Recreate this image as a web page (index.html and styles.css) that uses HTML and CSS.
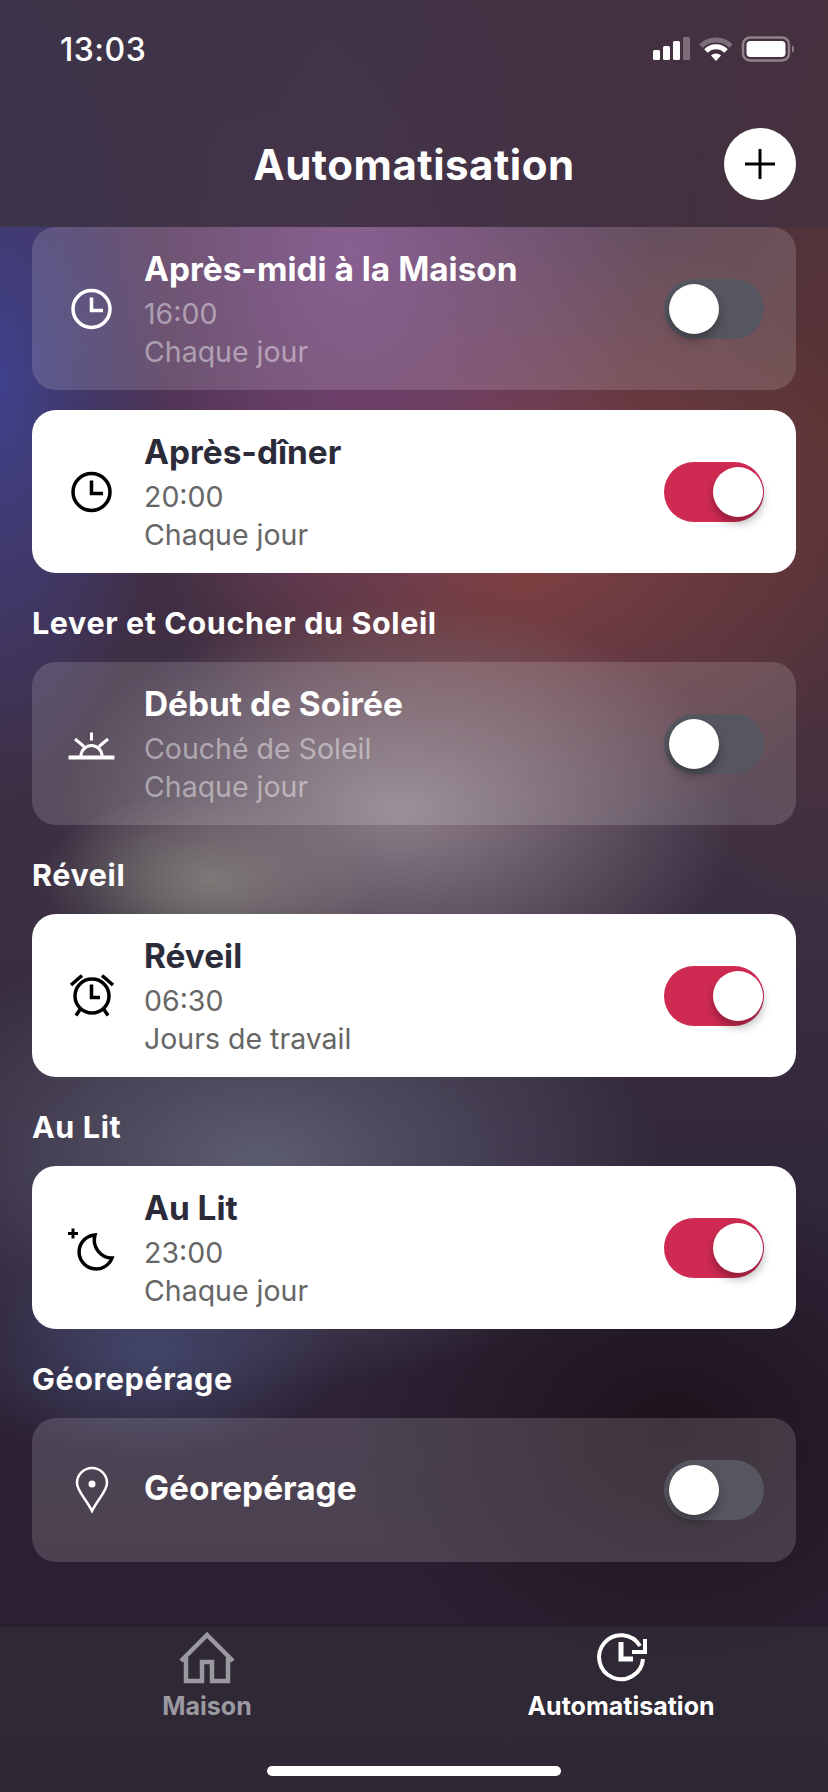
FILE: index.html
```html
<!DOCTYPE html>
<html lang="fr">
<head>
    <meta charset="UTF-8">
    <meta name="viewport" content="width=device-width, initial-scale=1.0">
    <title>Automatisation</title>
    <link rel="stylesheet" href="styles.css">
</head>
<body>
    <div class="screen">
        <header class="top">
            <div class="status">
                <span class="status-time">13:03</span>
                <svg class="status-icons" width="142" height="26" viewBox="0 0 142 26">
                    <rect x="1" y="14" width="7" height="10" rx="1.5" fill="#fff"/>
                    <rect x="11" y="10" width="7" height="14" rx="1.5" fill="#fff"/>
                    <rect x="21" y="5" width="7" height="19" rx="1.5" fill="#fff"/>
                    <rect x="31" y="1" width="7" height="23" rx="1.5" fill="#fff" opacity=".3"/>
                    <path d="M49 10a22 22 0 0 1 30 0" fill="none" stroke="#fff" stroke-opacity=".3" stroke-width="5"/>
                    <path d="M54 15a14 14 0 0 1 20 0" fill="none" stroke="#fff" stroke-width="5"/>
                    <path d="M59 19.500a7 7 0 0 1 10 0L64 25z" fill="#fff"/>
                    <rect x="91" y="1.500" width="46" height="23" rx="7" fill="none" stroke="#fff" stroke-opacity=".4" stroke-width="2.500"/>
                    <rect x="94.500" y="5" width="39" height="16" rx="4" fill="#fff"/>
                    <path d="M140 9.500c1.500.5 2 2 2 3.500s-.5 3-2 3.500z" fill="#fff" opacity=".4"/>
                </svg>
            </div>
            <div class="top-bar">
                <h1 class="top-title">Automatisation</h1>
                <button class="add-btn" type="button">
                    <svg width="32" height="32" viewBox="0 0 32 32"><path d="M16 1v30M1 16h30" stroke="#000" stroke-width="3"/></svg>
                </button>
            </div>
        </header>

        <main class="list">
            <div class="card off">
                <svg class="card-icon" viewBox="0 0 46 46"><circle cx="23.500" cy="23" r="18.500"/><path d="M23.500 11.500v13H35"/></svg>
                <div class="card-text">
                    <div class="card-title">Après-midi à la Maison</div>
                    <div class="card-sub">16:00</div>
                    <div class="card-sub">Chaque jour</div>
                </div>
                <div class="toggle"><span class="knob"></span></div>
            </div>
            <div class="card on">
                <svg class="card-icon" viewBox="0 0 46 46"><circle cx="23.500" cy="23" r="18.500"/><path d="M23.500 11.500v13H35"/></svg>
                <div class="card-text">
                    <div class="card-title">Après-dîner</div>
                    <div class="card-sub">20:00</div>
                    <div class="card-sub">Chaque jour</div>
                </div>
                <div class="toggle"><span class="knob"></span></div>
            </div>

            <h2 class="section">Lever et Coucher du Soleil</h2>
            <div class="card off">
                <svg class="card-icon" viewBox="0 0 46 46"><path d="M.5 36.500h46" stroke-width="4"/><path d="M13 35a10.500 10.500 0 0 1 21 0M23.500 11.500v8M7 18l9 7.500M40 18l-9 7.500" stroke-width="3"/></svg>
                <div class="card-text">
                    <div class="card-title">Début de Soirée</div>
                    <div class="card-sub">Couché de Soleil</div>
                    <div class="card-sub">Chaque jour</div>
                </div>
                <div class="toggle"><span class="knob"></span></div>
            </div>

            <h2 class="section">Réveil</h2>
            <div class="card on">
                <svg class="card-icon" viewBox="0 0 46 46"><circle cx="24" cy="23" r="17"/><path d="M23.500 11.500v13H32M3 12 14 2.500M45 12 34 2.500M13 35 8 42.500M35 35l5 7.500"/></svg>
                <div class="card-text">
                    <div class="card-title">Réveil</div>
                    <div class="card-sub">06:30</div>
                    <div class="card-sub">Jours de travail</div>
                </div>
                <div class="toggle"><span class="knob"></span></div>
            </div>

            <h2 class="section">Au Lit</h2>
            <div class="card on">
                <svg class="card-icon" viewBox="0 0 46 46"><path d="M27 10A17 17 0 1 0 44 33 18 18 0 0 1 27 10z"/><path d="M5 3.500v10M0 8.500h10" stroke-width="3"/></svg>
                <div class="card-text">
                    <div class="card-title">Au Lit</div>
                    <div class="card-sub">23:00</div>
                    <div class="card-sub">Chaque jour</div>
                </div>
                <div class="toggle"><span class="knob"></span></div>
            </div>

            <h2 class="section">Géorepérage</h2>
            <div class="card off short">
                <svg class="card-icon" viewBox="0 0 46 46"><path d="M24 44C18 32 9 24 9 16a15 15 0 0 1 30 0C39 24 30 32 24 44z" stroke-width="2.500"/><circle class="dot" cx="24" cy="17" r="3.500"/></svg>
                <div class="card-text">
                    <div class="card-title">Géorepérage</div>
                </div>
                <div class="toggle"><span class="knob"></span></div>
            </div>
        </main>

        <nav class="tabs">
            <div class="tab">
                <svg class="tab-icon" viewBox="0 0 60 54"><path d="M4 29 30 3l26 26M9 24v25h16V30h10v19h16V24" fill="none" stroke="currentColor" stroke-width="4.500"/></svg>
                <span>Maison</span>
            </div>
            <div class="tab active">
                <svg class="tab-icon" viewBox="0 0 60 54"><path d="M49 14A22 22 0 1 0 52 27" fill="none" stroke="currentColor" stroke-width="4"/><path d="M30 10v17h12" fill="none" stroke="currentColor" stroke-width="5"/><path d="M41 20h13V7" fill="none" stroke="currentColor" stroke-width="4"/></svg>
                <span>Automatisation</span>
            </div>
            <div class="home-bar"></div>
        </nav>
    </div>
</body>
</html>
```

FILE: styles.css
```css
body {
    margin: 0;
    font-family: Inter, "Liberation Sans", sans-serif;
    color: #fff;
    background-color: #2c1c30;
}

.screen {
    width: 828px;
    height: 1792px;
    display: flex;
    flex-direction: column;
    overflow: hidden;
    background-color: #2c1e30;
    background-image:
        radial-gradient(ellipse 170px 420px at 0 380px, #3f418c 0%, rgba(63, 65, 140, 0) 100%),
        radial-gradient(ellipse 340px 210px at 400px 810px, #8c7e88 0%, rgba(140, 126, 136, 0) 100%),
        radial-gradient(ellipse 170px 90px at 210px 880px, #76766e 0%, rgba(118, 118, 110, 0) 100%),
        radial-gradient(ellipse 200px 110px at 150px 1350px, #42466a 0%, rgba(66, 70, 106, 0) 100%),
        radial-gradient(ellipse 400px 230px at 260px 1160px, #5c5c70 0%, rgba(92, 92, 112, 0) 100%),
        radial-gradient(ellipse 320px 250px at 670px 1430px, #1d121b 0%, rgba(29, 18, 27, 0) 100%),
        radial-gradient(ellipse 300px 400px at 350px 250px, #74447e 0%, rgba(116, 68, 126, 0) 100%),
        radial-gradient(ellipse 360px 330px at 520px 530px, #864240 0%, rgba(134, 66, 64, 0) 100%),
        radial-gradient(ellipse 260px 520px at 828px 420px, #5a3434 0%, rgba(90, 52, 52, 0) 100%),
        linear-gradient(180deg, #4a2f48 0%, #3b2f42 50%, #2e2438 72%, #2a1c2e 100%);
}

.top {
    flex: none;
    height: 227px;
    background-image: linear-gradient(90deg, rgba(60, 52, 72, 0.9), rgba(68, 48, 62, 0.9));
}

.status {
    height: 98px;
    padding: 0 34px 0 60px;
    display: flex;
    justify-content: space-between;
    align-items: center;
}

.status-time {
    font-size: 32px;
    font-weight: 500;
    letter-spacing: 0.5px;
}

.top-bar {
    position: relative;
    height: 72px;
    margin-top: 30px;
    display: flex;
    justify-content: center;
    align-items: center;
}

.top-title {
    margin: 0;
    font-size: 42px;
    font-weight: 700;
    letter-spacing: 0.5px;
}

.add-btn {
    position: absolute;
    right: 32px;
    top: 0;
    width: 72px;
    height: 72px;
    padding: 0;
    border: none;
    border-radius: 50%;
    background-color: #fff;
    display: flex;
    justify-content: center;
    align-items: center;
}

.list {
    flex: 1;
    padding: 0 32px;
    overflow: hidden;
}

.section {
    margin: 0;
    height: 89px;
    padding-top: 10px;
    box-sizing: border-box;
    display: flex;
    align-items: center;
    font-size: 30.5px;
    font-weight: 700;
    letter-spacing: 0.6px;
}

.card {
    height: 163px;
    box-sizing: border-box;
    padding: 0 32px 0 36px;
    border-radius: 24px;
    display: flex;
    align-items: center;
}

.card + .card {
    margin-top: 20px;
}

.card.short {
    height: 144px;
}

.card.off {
    background-color: rgba(255, 255, 255, 0.15);
}

.card.on {
    background-color: #fff;
    color: #2c2b3a;
}

.card-icon {
    flex: none;
    width: 46px;
    height: 46px;
    margin-right: 30px;
    overflow: visible;
    fill: none;
    stroke: currentColor;
    stroke-width: 3.5;
}

.card.on .card-icon {
    color: #000;
}

.card-icon .dot {
    fill: currentColor;
    stroke: none;
}

.card-text {
    flex: 1;
    min-width: 0;
    padding-top: 1px;
}

.card.short .card-text {
    padding: 0 0 5px;
}

.card-title {
    font-size: 33.4px;
    font-weight: 700;
    line-height: 44px;
}

.card-title:not(:last-child) {
    margin-bottom: 4px;
}

.card-sub {
    font-size: 28.5px;
    line-height: 38.5px;
}

.card.on .card-sub {
    color: #666;
}

.card.off .card-sub {
    color: rgba(255, 255, 255, 0.45);
}

.toggle {
    flex: none;
    width: 100px;
    height: 60px;
    box-sizing: border-box;
    padding: 5px;
    border-radius: 30px;
    display: flex;
}

.card.off .toggle {
    background-color: #565660;
}

.card.on .toggle {
    background-color: #cf2a52;
    justify-content: flex-end;
    padding-right: 1px;
}

.knob {
    width: 50px;
    height: 50px;
    border-radius: 50%;
    background-color: #fff;
    box-shadow: 0 6px 10px rgba(0, 0, 0, 0.3);
}

.tabs {
    position: relative;
    flex: none;
    height: 165px;
    display: flex;
    background-color: rgba(48, 40, 54, 0.97);
}

.tab {
    flex: 1;
    height: 110px;
    display: flex;
    flex-direction: column;
    align-items: center;
    font-size: 25px;
    font-weight: 700;
    color: #9b99a0;
}

.tab.active {
    color: #fff;
}

.tab-icon {
    width: 60px;
    height: 54px;
    margin-top: 5px;
    margin-bottom: 5px;
}

.home-bar {
    position: absolute;
    left: 267px;
    top: 139px;
    width: 294px;
    height: 10px;
    border-radius: 5px;
    background-color: #fff;
}
```
